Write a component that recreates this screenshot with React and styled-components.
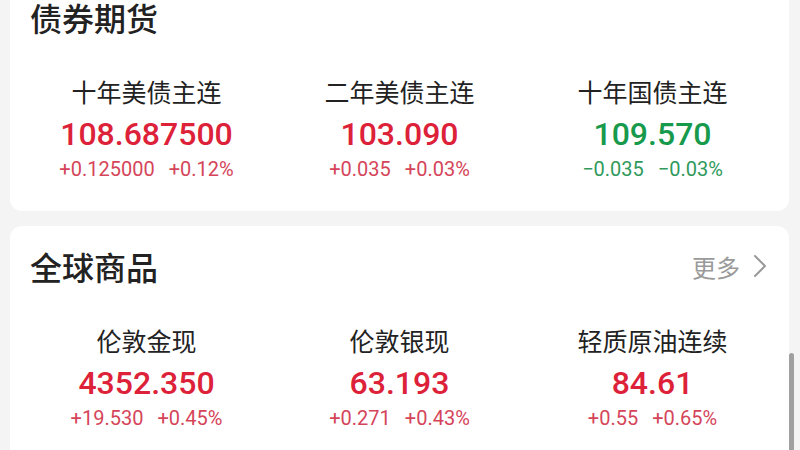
import React from 'react';
import styled, { createGlobalStyle } from 'styled-components';

const GlobalStyle = createGlobalStyle`
  html, body {
    margin: 0;
    padding: 0;
    background: #f4f4f4;
    overflow: hidden;
  }
  body {
    font-family: "Noto Sans CJK SC", "Noto Sans", sans-serif;
  }
`;

const Screen = styled.div`
  position: relative;
  width: 800px;
  height: 450px;
  overflow: hidden;
`;

const Page = styled.div`
  display: flex;
  flex-direction: column;
  gap: 15px;
  padding: 0 11px 0 10px;
  margin-top: -23px;
`;

const Card = styled.section`
  background: #fff;
  border-radius: 12px;
  padding: 24px 10px 30px;
`;

const Header = styled.div`
  display: flex;
  align-items: center;
  justify-content: space-between;
  padding: 0 11px 0 10px;
  height: 32px;
`;

const Title = styled.h2`
  margin: 0;
  font-size: 32px;
  line-height: 32px;
  font-weight: 500;
  color: #222;
`;

const More = styled.div`
  display: flex;
  align-items: center;
  gap: 12px;
  font-size: 24px;
  color: #9a9a9a;
`;

const Grid = styled.div`
  display: grid;
  grid-template-columns: repeat(3, 1fr);
  margin-top: 43px;
`;

const Item = styled.div`
  display: flex;
  flex-direction: column;
  align-items: center;
`;

const Name = styled.div`
  font-size: 25px;
  line-height: 30px;
  color: #222;
`;

const Price = styled.div`
  margin-top: 8px;
  font-family: Roboto, "Noto Sans", sans-serif;
  font-size: 32px;
  line-height: 40px;
  font-weight: 500;
  color: ${p => (p.down ? '#179a4c' : '#dc2139')};
`;

const Change = styled.div`
  display: flex;
  gap: 14px;
  margin-top: 3px;
  font-family: Roboto, "Noto Sans", sans-serif;
  font-size: 20px;
  line-height: 24px;
  color: ${p => (p.down ? '#2f9a5c' : '#d5455a')};
`;

const ScrollThumb = styled.div`
  position: absolute;
  right: 6px;
  top: 353px;
  width: 5px;
  height: 110px;
  border-radius: 3px;
  background: #a0a0a0;
`;

const bonds = [
  { name: '十年美债主连', price: '108.687500', diff: '+0.125000', pct: '+0.12%' },
  { name: '二年美债主连', price: '103.090', diff: '+0.035', pct: '+0.03%' },
  { name: '十年国债主连', price: '109.570', diff: '−0.035', pct: '−0.03%', down: true },
];

const goods = [
  { name: '伦敦金现', price: '4352.350', diff: '+19.530', pct: '+0.45%' },
  { name: '伦敦银现', price: '63.193', diff: '+0.271', pct: '+0.43%' },
  { name: '轻质原油连续', price: '84.61', diff: '+0.55', pct: '+0.65%' },
];

const Chevron = () => (
  <svg width="16" height="24" viewBox="0 0 16 24" fill="none">
    <polyline points="3,2 13,12 3,22" stroke="#9a9a9a" strokeWidth="2" strokeLinecap="round" strokeLinejoin="round" />
  </svg>
);

const Quote = ({ data }) => (
  <Item>
    <Name>{data.name}</Name>
    <Price down={data.down}>{data.price}</Price>
    <Change down={data.down}>
      <span>{data.diff}</span>
      <span>{data.pct}</span>
    </Change>
  </Item>
);

const Section = ({ title, list, more }) => (
  <Card>
    <Header>
      <Title>{title}</Title>
      {more && (
        <More>
          更多
          <Chevron />
        </More>
      )}
    </Header>
    <Grid>
      {list.map(q => (
        <Quote key={q.name} data={q} />
      ))}
    </Grid>
  </Card>
);

const App = () => {
  return (
    <Screen>
      <GlobalStyle />
      <Page>
        <Section title="债券期货" list={bonds} />
        <Section title="全球商品" list={goods} more />
      </Page>
      <ScrollThumb />
    </Screen>
  );
};

export default App;
